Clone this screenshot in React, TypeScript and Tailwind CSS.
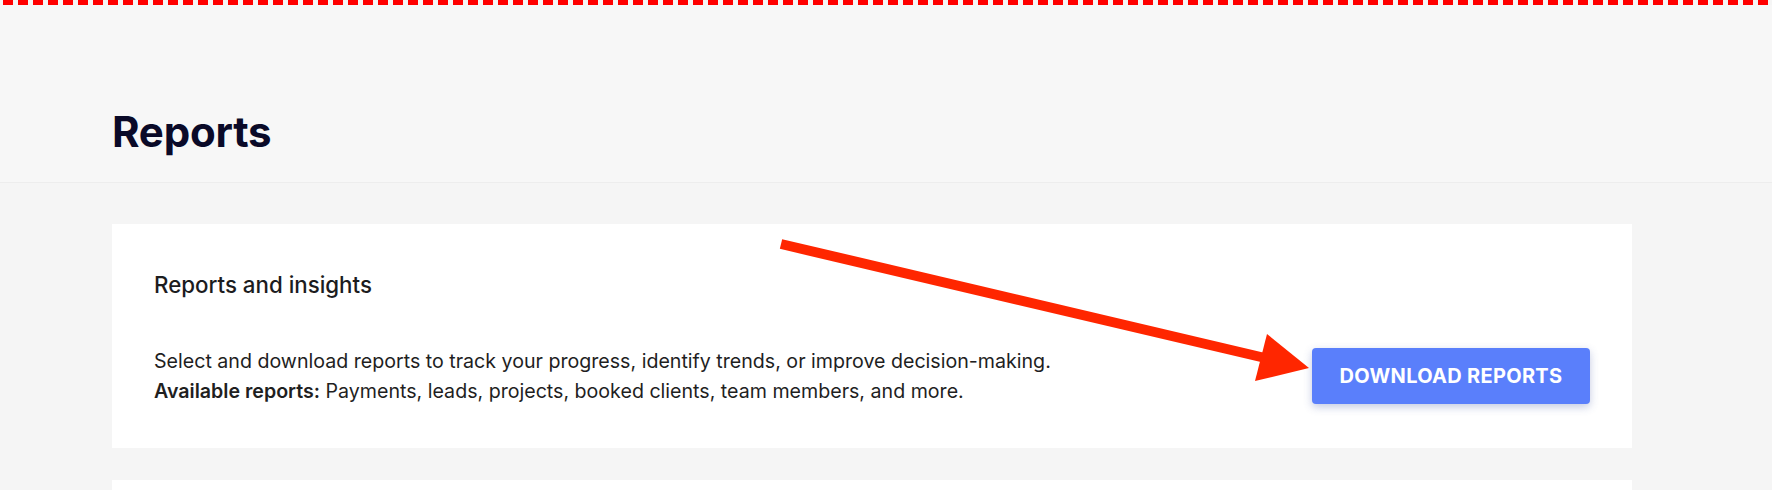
import React from "react";

const bodyFont = { fontFamily: "Inter, 'Liberation Sans', sans-serif" };

export default function App() {
  return (
    <div className="relative h-[490px] w-full overflow-hidden bg-[#f5f5f5]" style={bodyFont}>
      {/* dashed top edge */}
      <div className="h-[5px] w-full bg-[repeating-linear-gradient(to_right,transparent_0_3px,#ff0000_3px_13px,transparent_13px_15px)]" />

      {/* Header */}
      <header className="h-[178px] border-b border-[#ededed] bg-[#f7f7f7] pl-[112px] pt-[101px]">
        <h1 className="text-[42px] font-bold leading-[52px] tracking-[-0.2px] text-[#0a0a28]">Reports</h1>
      </header>

      {/* Content */}
      <main className="pl-[112px] pt-[41px]">
        <section className="w-[1520px] bg-white px-[42px] pb-[42px] pt-[45px]">
          <h2 className="text-[22.3px] font-medium leading-[32px] text-[#1c1c1e]">Reports and insights</h2>
          <div className="mt-[45px] flex items-center justify-between">
            <p className="text-[19.62px] leading-[30px] text-[#1f1f1f]">
              Select and download reports to track your progress, identify trends, or improve decision-making.
              <br />
              <span className="font-semibold">Available reports:</span> Payments, leads, projects, booked clients, team members, and more.
            </p>
            <button className="h-[56px] w-[278px] rounded-[4px] bg-[#5a7ffb] text-[20px] font-bold tracking-[0.3px] text-white shadow-[0_3px_8px_rgba(60,80,160,0.3)]">
              DOWNLOAD REPORTS
            </button>
          </div>
        </section>
        <section className="mt-[32px] h-[60px] w-[1520px] bg-white" />
      </main>

      {/* annotation arrow */}
      <svg className="pointer-events-none absolute inset-0" width="1772" height="490" viewBox="0 0 1772 490">
        <line x1="781" y1="244" x2="1263" y2="357.5" stroke="#ff2600" strokeWidth="10" />
        <polygon points="1267,334 1309,368 1255,381" fill="#ff2600" />
      </svg>
    </div>
  );
}
